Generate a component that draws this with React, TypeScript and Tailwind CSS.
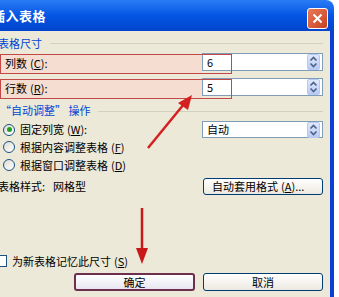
const font = { fontFamily: '"Noto Sans CJK SC", "Noto Sans", sans-serif' };

function Spin() {
  return (
    <div className="flex h-[16px] w-[13px] items-center justify-center rounded-[2px] border border-[#b8c9ef] bg-gradient-to-b from-[#dfe8fc] to-[#b9cbf5]">
      <svg width="9" height="12" viewBox="0 0 9 12">
        <path d="M1.5 4.5 L4.5 1.5 L7.5 4.5" fill="none" stroke="#4d6185" strokeWidth="1.6" />
        <path d="M1.5 7.5 L4.5 10.5 L7.5 7.5" fill="none" stroke="#4d6185" strokeWidth="1.6" />
      </svg>
    </div>
  );
}

function Field({ value, h = "h-[18px]" }: { value: string; h?: string }) {
  return (
    <div className={`flex ${h} w-[121px] items-center justify-between border border-[#7f9db9] bg-white pl-[4px] pr-[2px]`}>
      <span className="text-[11px] text-black">{value}</span>
      <Spin />
    </div>
  );
}

function Key({ k }: { k: string }) {
  return (
    <span className="ml-[3px]">
      (<span className="underline">{k}</span>)
    </span>
  );
}

function Radio({ on }: { on?: boolean }) {
  return (
    <div className="flex h-[12px] w-[12px] items-center justify-center rounded-full border border-[#1c5180] bg-gradient-to-br from-[#dcdcd6] to-white">
      {on && <div className="h-[5px] w-[5px] rounded-full bg-[#21a121]" />}
    </div>
  );
}

function SizeRow({ label, k, value }: { label: string; k: string; value: string }) {
  return (
    <div className="relative flex h-[20px] items-start">
      <div className="mt-[1px] flex h-[19px] w-[202px] items-center bg-[#f5ddd1] pl-[5px]">
        {label}
        <Key k={k} />:
      </div>
      <Field value={value} />
      <div className="absolute left-0 top-[1px] h-[20px] w-[232px] border border-[#c24848]" />
    </div>
  );
}

export default function App() {
  return (
    <div className="relative flex h-[297px] w-[339px] overflow-hidden bg-white text-[11px] text-black" style={font}>
      <div className="flex w-[334px] flex-col overflow-hidden rounded-tr-[8px]">
        <div className="flex h-[31px] shrink-0 items-start justify-between bg-gradient-to-b from-[#2a7cf5] via-[#0455e3] to-[#0244cc]">
          <span className="-ml-[8px] mt-[9px] text-[13px] font-bold leading-none tracking-[0.5px] text-white">插入表格</span>
          <div className="mr-[6px] mt-[8px] flex h-[21px] w-[21px] items-center justify-center rounded-[3px] border border-white bg-gradient-to-br from-[#e87a58] to-[#c9401c]">
            <svg width="11" height="11" viewBox="0 0 11 11">
              <path d="M1.5 1.5 L9.5 9.5 M9.5 1.5 L1.5 9.5" stroke="white" strokeWidth="2" />
            </svg>
          </div>
        </div>
        <div className="flex flex-1 flex-col border-r-4 border-[#0b3fd6] bg-[#ece9d8]">
          <div className="mt-[5px] flex h-[14px] items-center">
            <span className="-ml-[2px] text-[#0046d5]">表格尺寸</span>
            <div className="ml-[8px] mr-[7px] h-px flex-1 bg-[#d3d0bf]" />
          </div>
          <div className="mt-[3px]">
            <SizeRow label="列数" k="C" value="6" />
          </div>
          <div className="mt-[5px]">
            <SizeRow label="行数" k="R" value="5" />
          </div>
          <div className="mt-[5px] flex h-[14px] items-center">
            <span className="text-[#0046d5]">“自动调整” 操作</span>
            <div className="ml-[8px] mr-[7px] mt-[3px] h-px flex-1 bg-[#d3d0bf]" />
          </div>
          <div className="mt-[4px] flex h-[17px] items-center">
            <div className="ml-[3px]"><Radio on /></div>
            <span className="ml-[5px] w-[182px]">固定列宽<Key k="W" />:</span>
            <Field value="自动" h="h-[17px]" />
          </div>
          <div className="flex h-[18px] items-center">
            <div className="ml-[3px]"><Radio /></div>
            <span className="ml-[5px]">根据内容调整表格<Key k="F" /></span>
          </div>
          <div className="flex h-[18px] items-center">
            <div className="ml-[3px]"><Radio /></div>
            <span className="ml-[5px]">根据窗口调整表格<Key k="D" /></span>
          </div>
          <div className="mt-[4px] flex h-[17px] items-center">
            <span className="-ml-[2px] w-[55px]">表格样式:</span>
            <span className="w-[150px]">网格型</span>
            <div className="flex h-[17px] w-[120px] items-center rounded-[3px] border border-[#003c74] bg-gradient-to-b from-white to-[#ece9e0] pl-[8px]">
              自动套用格式<Key k="A" />...
            </div>
          </div>
          <div className="mt-[60px] flex h-[12px] items-center">
            <div className="-ml-[5px] h-[12px] w-[12px] border border-[#1c5180] bg-white" />
            <span className="ml-[5px]">为新表格记忆此尺寸<Key k="S" /></span>
          </div>
          <div className="mt-[6px] flex h-[18px] items-center">
            <div className="ml-[74px] flex h-[18px] w-[121px] items-center justify-center rounded-[3px] border-2 border-[#6e2f4f] bg-gradient-to-b from-white to-[#e8e6f0]">
              确定
            </div>
            <div className="ml-[8px] flex h-[18px] w-[120px] items-center justify-center rounded-[3px] border border-[#003c74] bg-gradient-to-b from-white to-[#ece9e0]">
              取消
            </div>
          </div>
        </div>
      </div>
      <svg className="pointer-events-none absolute inset-0" width="339" height="297" viewBox="0 0 339 297">
        <line x1="148" y1="148" x2="184" y2="104" stroke="#d42020" strokeWidth="2.5" />
        <polygon points="192,95 178,103 188,110" fill="#d42020" />
        <line x1="142" y1="208" x2="142" y2="250" stroke="#c81818" strokeWidth="2.5" />
        <polygon points="142,264 136,248 148,248" fill="#c81818" />
      </svg>
    </div>
  );
}
